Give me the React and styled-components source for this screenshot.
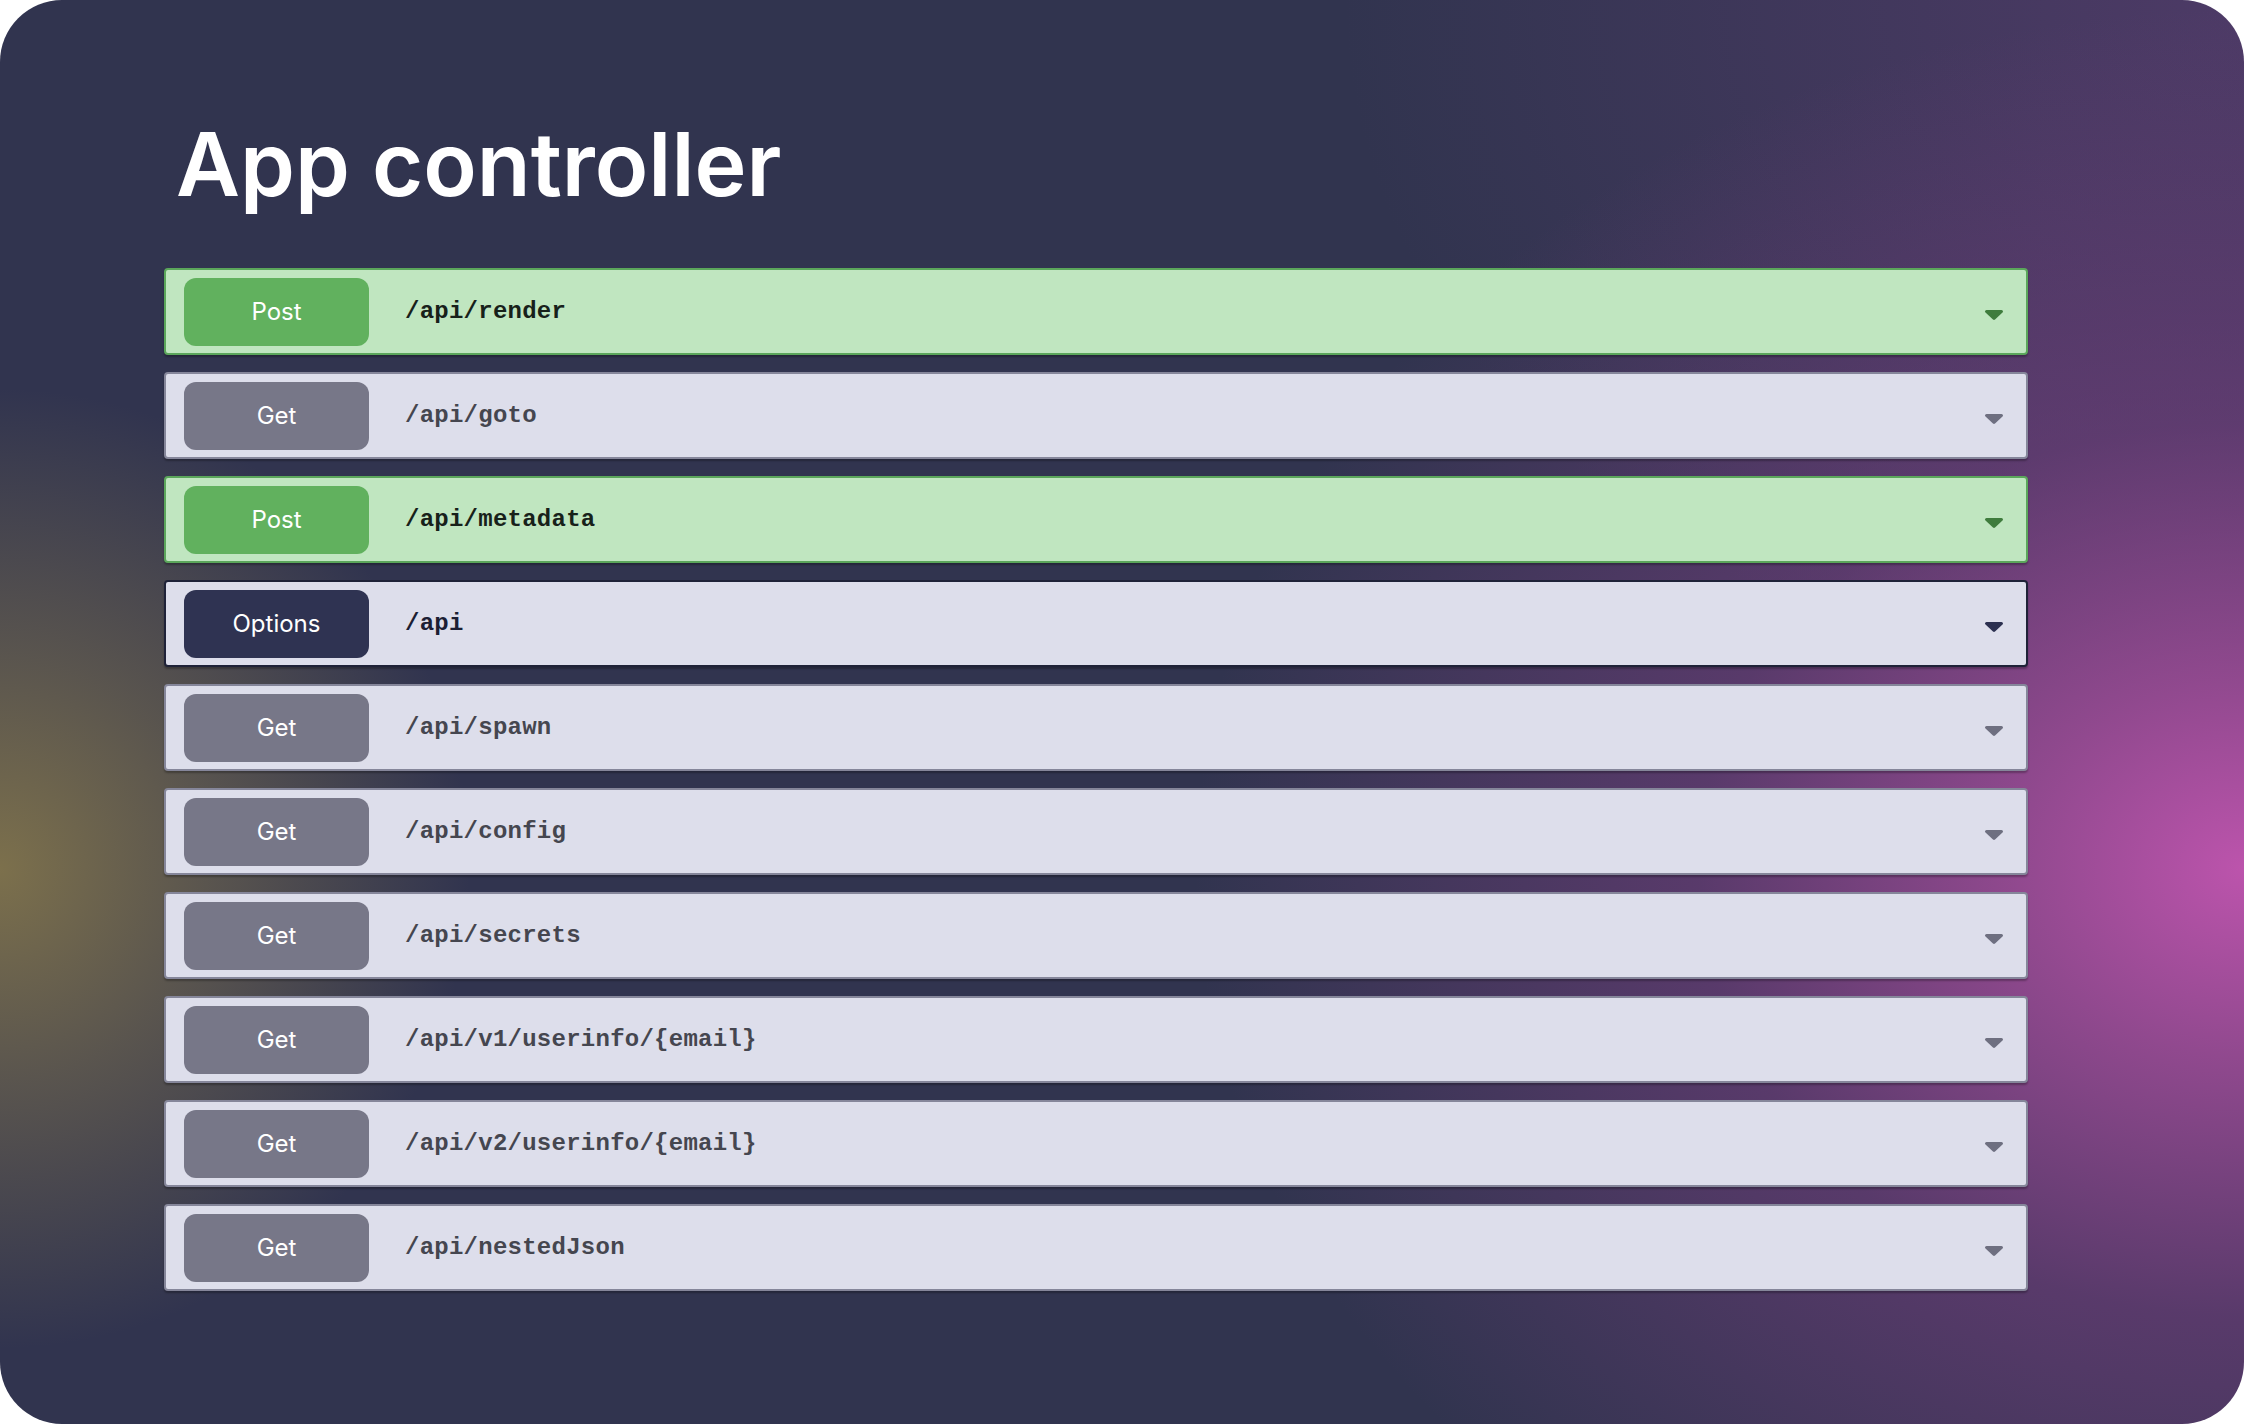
import React from 'react';
import styled, { createGlobalStyle } from 'styled-components';

const GlobalStyle = createGlobalStyle`
  html, body {
    margin: 0;
    padding: 0;
    background: #ffffff;
  }
  * {
    box-sizing: border-box;
  }
`;

const ENDPOINTS = [
  { method: 'post', path: '/api/render' },
  { method: 'get', path: '/api/goto' },
  { method: 'post', path: '/api/metadata' },
  { method: 'options', path: '/api' },
  { method: 'get', path: '/api/spawn' },
  { method: 'get', path: '/api/config' },
  { method: 'get', path: '/api/secrets' },
  { method: 'get', path: '/api/v1/userinfo/{email}' },
  { method: 'get', path: '/api/v2/userinfo/{email}' },
  { method: 'get', path: '/api/nestedJson' },
];

const THEMES = {
  post: {
    label: 'Post',
    rowBg: '#c0e6c0',
    border: '#5ba65b',
    badge: '#61b15e',
    text: '#17211a',
    caret: '#3f7c3d',
  },
  get: {
    label: 'Get',
    rowBg: '#dddeeb',
    border: '#85869a',
    badge: '#777788',
    text: '#45464f',
    caret: '#6e6f80',
  },
  options: {
    label: 'Options',
    rowBg: '#dddeeb',
    border: '#1f2238',
    badge: '#2f3352',
    text: '#1c1f34',
    caret: '#2c3050',
  },
};

const Caret = ({ color }) => (
  <CaretIcon width="20" height="12" viewBox="0 0 20 12" aria-hidden="true">
    <path
      d="M2.5 2.5 L17.5 2.5 L10 9.5 Z"
      fill={color}
      stroke={color}
      strokeWidth="3"
      strokeLinejoin="round"
    />
  </CaretIcon>
);

const EndpointRow = ({ method, path }) => {
  const theme = THEMES[method];
  return (
    <Row $bg={theme.rowBg} $border={theme.border}>
      <Badge $bg={theme.badge}>{theme.label}</Badge>
      <Path $color={theme.text}>{path}</Path>
      <Caret color={theme.caret} />
    </Row>
  );
};

const App = () => {
  return (
    <>
      <GlobalStyle />
      <Card>
        <Title>App controller</Title>
        <List>
          {ENDPOINTS.map((endpoint) => (
            <EndpointRow key={endpoint.path} {...endpoint} />
          ))}
        </List>
      </Card>
    </>
  );
};

const Card = styled.main`
  width: 2244px;
  height: 1424px;
  border-radius: 62px;
  overflow: hidden;
  padding: 111px 216px 0 164px;
  display: flex;
  flex-direction: column;
  background:
    radial-gradient(
      ellipse 1050px 860px at 100% 61%,
      rgba(188, 84, 172, 1) 0%,
      rgba(168, 78, 158, 0.8) 22%,
      rgba(128, 64, 134, 0.5) 52%,
      rgba(49, 52, 79, 0) 100%
    ),
    radial-gradient(
      ellipse 470px 480px at 0% 61%,
      rgba(124, 112, 76, 1) 0%,
      rgba(116, 106, 78, 0.6) 45%,
      rgba(49, 52, 79, 0) 100%
    ),
    radial-gradient(
      ellipse 900px 700px at 100% 0%,
      rgba(84, 60, 108, 0.8) 0%,
      rgba(49, 52, 79, 0) 100%
    ),
    #31344f;
`;

const Title = styled.h1`
  margin: 0 0 51px 12px;
  font-family: Inter, "Liberation Sans", sans-serif;
  font-size: 88px;
  font-weight: 600;
  line-height: normal;
  color: #ffffff;
`;

const List = styled.div`
  display: flex;
  flex-direction: column;
  gap: 17px;
`;

const Row = styled.div`
  height: 87px;
  display: flex;
  align-items: center;
  padding: 0 22px 0 18px;
  background: ${(p) => p.$bg};
  border: 2px solid ${(p) => p.$border};
  border-radius: 4px;
  box-shadow: 0 2px 2px rgba(0, 0, 0, 0.28);
`;

const Badge = styled.span`
  flex: none;
  width: 185px;
  height: 68px;
  display: flex;
  align-items: center;
  justify-content: center;
  border-radius: 12px;
  background: ${(p) => p.$bg};
  color: #ffffff;
  font-family: Inter, "Liberation Sans", sans-serif;
  font-size: 24px;
  font-weight: 400;
`;

const Path = styled.span`
  flex: 1;
  margin-left: 36px;
  font-family: "Liberation Mono", "Courier New", monospace;
  font-size: 24px;
  font-weight: 700;
  letter-spacing: 0.25px;
  color: ${(p) => p.$color};
`;

const CaretIcon = styled.svg`
  flex: none;
  display: block;
  margin-top: 6px;
`;

export default App;
